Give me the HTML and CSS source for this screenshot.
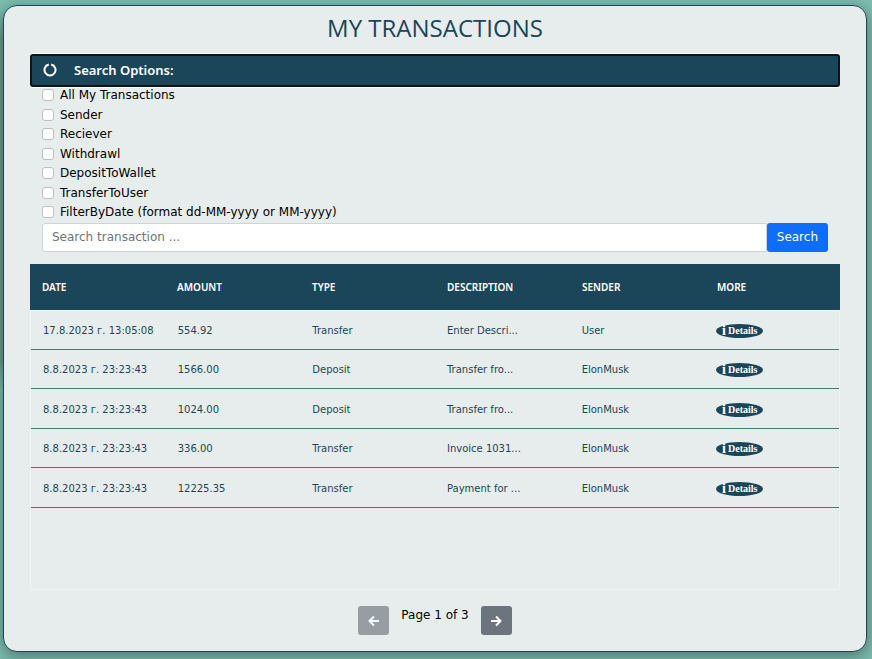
FILE: index.html
```html
<!DOCTYPE html>
<html lang="en">
<head>
<meta charset="utf-8">
<meta name="viewport" content="width=device-width, initial-scale=1">
<title>My Transactions</title>
<link rel="stylesheet" href="styles.css">
</head>
<body>
<main class="card">
  <h1 class="title">MY TRANSACTIONS</h1>
  <button class="options-toggle" type="button" aria-expanded="true">
    <svg class="ring" viewBox="0 0 14 14" aria-hidden="true"><path d="M8.2 1.6A5.5 5.5 0 1 1 5.8 1.6"/></svg>
    <span>Search Options:</span>
  </button>
  <form class="filters">
    <div class="options">
      <label class="option"><input type="checkbox">All My Transactions</label>
      <label class="option"><input type="checkbox">Sender</label>
      <label class="option"><input type="checkbox">Reciever</label>
      <label class="option"><input type="checkbox">Withdrawl</label>
      <label class="option"><input type="checkbox">DepositToWallet</label>
      <label class="option"><input type="checkbox">TransferToUser</label>
      <label class="option"><input type="checkbox">FilterByDate (format dd-MM-yyyy or MM-yyyy)</label>
    </div>
    <div class="search">
      <input class="search-input" type="text" placeholder="Search transaction ..." aria-label="Search transaction">
      <button class="search-button" type="button">Search</button>
    </div>
  </form>
  <table class="table table-head">
    <thead>
      <tr><th>DATE</th><th>AMOUNT</th><th>TYPE</th><th>DESCRIPTION</th><th>SENDER</th><th>MORE</th></tr>
    </thead>
  </table>
  <div class="table-scroll">
    <table class="table table-body">
      <tbody>
        <tr><td>17.8.2023 г. 13:05:08</td><td>554.92</td><td>Transfer</td><td>Enter Descri...</td><td>User</td><td><a class="details" href="#"><b class="info">i</b>Details</a></td></tr>
        <tr><td>8.8.2023 г. 23:23:43</td><td>1566.00</td><td>Deposit</td><td>Transfer fro...</td><td>ElonMusk</td><td><a class="details" href="#"><b class="info">i</b>Details</a></td></tr>
        <tr><td>8.8.2023 г. 23:23:43</td><td>1024.00</td><td>Deposit</td><td>Transfer fro...</td><td>ElonMusk</td><td><a class="details" href="#"><b class="info">i</b>Details</a></td></tr>
        <tr><td>8.8.2023 г. 23:23:43</td><td>336.00</td><td>Transfer</td><td>Invoice 1031...</td><td>ElonMusk</td><td><a class="details" href="#"><b class="info">i</b>Details</a></td></tr>
        <tr><td>8.8.2023 г. 23:23:43</td><td>12225.35</td><td>Transfer</td><td>Payment for ...</td><td>ElonMusk</td><td><a class="details" href="#"><b class="info">i</b>Details</a></td></tr>
      </tbody>
    </table>
  </div>
  <nav class="pager" aria-label="Pages">
    <button class="page-button" type="button" aria-label="Previous page" disabled><svg viewBox="0 0 12 12" aria-hidden="true"><path d="M6 1.5 1.5 6 6 10.5M1.8 6H11"/></svg></button>
    <span class="page-text">Page 1 of 3</span>
    <button class="page-button" type="button" aria-label="Next page"><svg viewBox="0 0 12 12" aria-hidden="true"><path d="M6 1.5 10.5 6 6 10.5M10.2 6H1"/></svg></button>
  </nav>
</main>
</body>
</html>
```
FILE: styles.css
```css
* { box-sizing: border-box; }

body {
  margin: 0;
  padding: 5px 5px 7px 3px;
  background: linear-gradient(to bottom, transparent, #6b9a8f 30px, #6b9a8f 350px, transparent) 0 10px / 3px 380px no-repeat, #7dbdb0;
  font-family: "DejaVu Sans", Verdana, sans-serif;
  font-size: 12px;
  line-height: 18px;
  color: #000;
}

button, input { font: inherit; }

.card {
  padding: 0 26px 16px;
  border: 1px solid #1b4659;
  border-radius: 14px;
  background: #e7eded;
  box-shadow: 0 4px 16px rgba(0, 0, 0, 0.4);
}

.title {
  margin: 0;
  padding: 6px 0 10px;
  font: 400 24px/32px "Open Sans", sans-serif;
  text-align: center;
  color: #1b4659;
}

.options-toggle {
  display: flex;
  align-items: center;
  gap: 17px;
  width: 100%;
  height: 33px;
  padding: 0 11px 1px;
  border: 2px solid #101417;
  border-radius: 3px;
  background: #1b4659;
  box-shadow: 0 -1px #fff, 0 1px #fff;
  color: #fff;
  font: 600 13px/20px "Noto Sans", sans-serif;
}

.ring { width: 14px; height: 14px; fill: none; stroke: #fff; stroke-width: 2; }

.filters { padding: 0 12px 12px; }

.options {
  display: flex;
  flex-direction: column;
  justify-content: space-between;
  height: 133px;
}

.option {
  display: flex;
  align-items: center;
  gap: 6px;
  line-height: 16px;
}

.option input {
  appearance: none;
  width: 12px;
  height: 12px;
  margin: 0;
  border: 1px solid #bfbfbf;
  border-radius: 3px;
  background: #fff;
}

.search { display: flex; padding-top: 3px; }

.search-input {
  flex: 1;
  min-width: 0;
  height: 29px;
  padding: 0 9px 1px;
  border: 1px solid #ced4da;
  border-radius: 3px 0 0 3px;
  background: #fff;
}

.search-input::placeholder { color: #6c757d; opacity: 1; }

.search-button {
  height: 29px;
  padding: 0 10px 1px;
  border: 0;
  border-radius: 3px;
  background: #0d6efd;
  color: #fff;
}

.table {
  width: 100%;
  table-layout: fixed;
  border-collapse: collapse;
  text-align: left;
  white-space: nowrap;
}

.table th {
  height: 46px;
  padding: 0 12px;
  background: #1b4659;
  color: #fff;
  font: 600 10px/16px "Noto Sans", sans-serif;
}

.table-scroll {
  min-height: 280px;
  border: 1px solid #eff3f3;
}

.table-body { height: 197px; }

.table td {
  padding: 2px 12px 0;
  border-bottom: 1px solid #4e776c;
  color: #1b4659;
  font-size: 10px;
  line-height: 16px;
}

.details {
  display: inline-flex;
  align-items: center;
  justify-content: center;
  gap: 2px;
  width: 47px;
  height: 14px;
  border-radius: 50%;
  background: #1b4659;
  color: #fff;
  font: 700 10px/14px "Liberation Serif", serif;
  text-decoration: none;
  vertical-align: middle;
}

.info { font-size: 14px; }

.pager {
  display: flex;
  justify-content: center;
  gap: 12px;
  padding-top: 16px;
}

.page-button {
  display: grid;
  place-items: center;
  width: 31px;
  height: 29px;
  padding: 0;
  border: 0;
  border-radius: 3px;
  background: #6c757d;
}

.page-button:disabled { opacity: 0.65; }

.page-button svg { width: 12px; height: 12px; fill: none; stroke: #fff; stroke-width: 2; }
```
